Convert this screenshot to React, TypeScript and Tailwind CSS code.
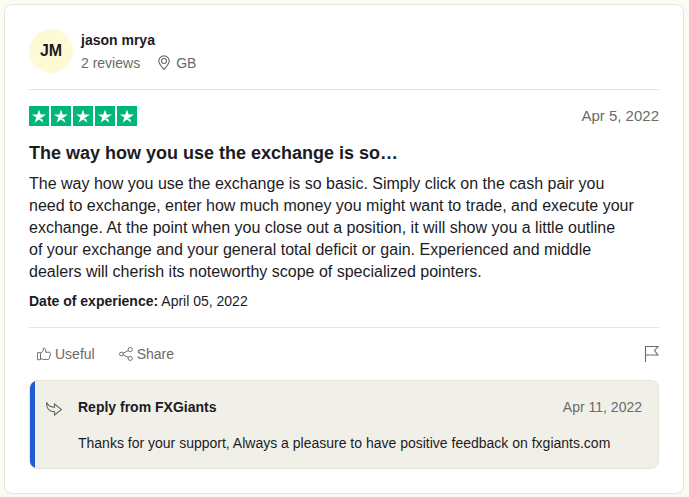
import type { ReactNode } from 'react';

interface IconProps {
  className?: string;
  children: ReactNode;
}

function Icon({ className = 'w-4 h-4', children }: IconProps) {
  return (
    <svg
      viewBox="0 0 16 16"
      fill="none"
      stroke="currentColor"
      strokeWidth="1.1"
      className={className}
      aria-hidden="true"
    >
      {children}
    </svg>
  );
}

function Stars({ count }: { count: number }) {
  return (
    <div className="flex gap-0.5" role="img" aria-label={`Rated ${count} out of 5 stars`}>
      {Array.from({ length: count }, (_, i) => (
        <svg key={i} viewBox="0 0 96 96" className="w-5 h-5 bg-[#00b67a]">
          <path
            fill="#fff"
            d="M48 64.7 62.6 61l6.1 18.8L48 64.7Zm33.6-24.3H55.9L48 16.2l-7.9 24.2H14.4l20.8 15-7.9 24.2 20.8-15 12.8-9.2 20.7-15Z"
          />
        </svg>
      ))}
    </div>
  );
}

const review = {
  initials: 'JM',
  name: 'jason mrya',
  reviews: '2 reviews',
  country: 'GB',
  date: 'Apr 5, 2022',
  title: 'The way how you use the exchange is so…',
  body: [
    'The way how you use the exchange is so basic. Simply click on the cash pair you',
    'need to exchange, enter how much money you might want to trade, and execute your',
    'exchange. At the point when you close out a position, it will show you a little outline',
    'of your exchange and your general total deficit or gain. Experienced and middle',
    'dealers will cherish its noteworthy scope of specialized pointers.',
  ].join('\n'),
  experienced: 'April 05, 2022',
};

const reply = {
  company: 'FXGiants',
  date: 'Apr 11, 2022',
  body: 'Thanks for your support, Always a pleasure to have positive feedback on fxgiants.com',
};

function App() {
  return (
    <div className="min-h-screen bg-[#fcfbf3] p-1 pr-[5px] pb-0 font-['Liberation_Sans',Arial,sans-serif] text-[#1c1b1f]">
      <article className="bg-white border border-[#e5e5dd] rounded-lg p-6">
        <header className="flex items-center gap-2 border-b border-[#e5e5e5] pb-4">
          <div className="w-11 h-11 shrink-0 rounded-full bg-[#fffad6] flex items-center justify-center font-bold">
            {review.initials}
          </div>
          <div className="text-sm">
            <div className="font-bold leading-5">{review.name}</div>
            <div className="flex items-center gap-4 pt-[3px] leading-5 text-[#696a6a]">
              <span>{review.reviews}</span>
              <span className="flex items-center gap-1">
                <Icon>
                  <path d="M8 14.500C6.200 12 2.800 9.300 2.800 6.100a5.200 5.200 0 0 1 10.400 0C13.200 9.300 9.800 12 8 14.500Z" />
                  <circle cx="8" cy="6" r="2.500" />
                </Icon>
                {review.country}
              </span>
            </div>
          </div>
        </header>

        <section className="border-b border-[#e5e5e5] py-4">
          <div className="flex items-center justify-between">
            <Stars count={5} />
            <time className="text-[15px] leading-5 text-[#696a6a]">{review.date}</time>
          </div>
          <h2 className="pt-[15px] text-lg leading-6 font-bold">{review.title}</h2>
          <p className="pt-2 leading-[22px] whitespace-pre-line">{review.body}</p>
          <p className="pt-2 text-sm leading-5">
            <b>Date of experience:</b> {review.experienced}
          </p>
        </section>

        <div className="flex items-center justify-between py-4 text-sm leading-5 text-[#696a6a]">
          <div className="flex gap-6 pl-2">
            <button type="button" className="flex items-center gap-1">
              <Icon className="w-[14px] h-[14px]">
                <path d="M.5 6.500h3.500v8H.5zM4 7.500l3-3.200V1.500c1.700-.6 3 .3 3 2V6h4.200c.9 0 1.400.7 1.200 1.500l-1.300 5.500c-.2.700-.8 1.200-1.600 1.200H7L4 13" />
              </Icon>
              Useful
            </button>
            <button type="button" className="flex items-center gap-1">
              <Icon className="w-[14px] h-[14px]">
                <circle cx="2.700" cy="8" r="2.100" />
                <circle cx="12.800" cy="3" r="2.400" />
                <circle cx="12.800" cy="13" r="2.400" />
                <path d="m4.700 7.100 5.900-3M4.700 8.900l5.900 3" />
              </Icon>
              Share
            </button>
          </div>
          <button type="button" aria-label="Flag review">
            <Icon>
              <path d="M2.500 16V.5h12.500L11.500 4.500 15 9H2.500" />
            </Icon>
          </button>
        </div>

        <section className="relative overflow-hidden flex gap-4 rounded-lg border border-[#e5e5dd] bg-[#f1f0e8] px-4 pt-4 pb-[15px]">
          <span className="absolute inset-y-0 left-0 w-[5px] bg-[#205cd4]" />
          <Icon className="w-4 h-4 mt-1 shrink-0 text-[#696a6a]">
            <path d="M.6 1.200C0 7.500 3.500 10.800 8.500 10.800v3.200l7-5.500-7-5.500v3.200C4.500 6.200 2 4.500.6 1.200Z" />
          </Icon>
          <div className="flex-1 text-sm leading-5">
            <div className="flex justify-between">
              <h3 className="font-bold">Reply from {reply.company}</h3>
              <time className="text-[#696a6a]">{reply.date}</time>
            </div>
            <p className="pt-4">{reply.body}</p>
          </div>
        </section>
      </article>
    </div>
  );
}

export default App;
